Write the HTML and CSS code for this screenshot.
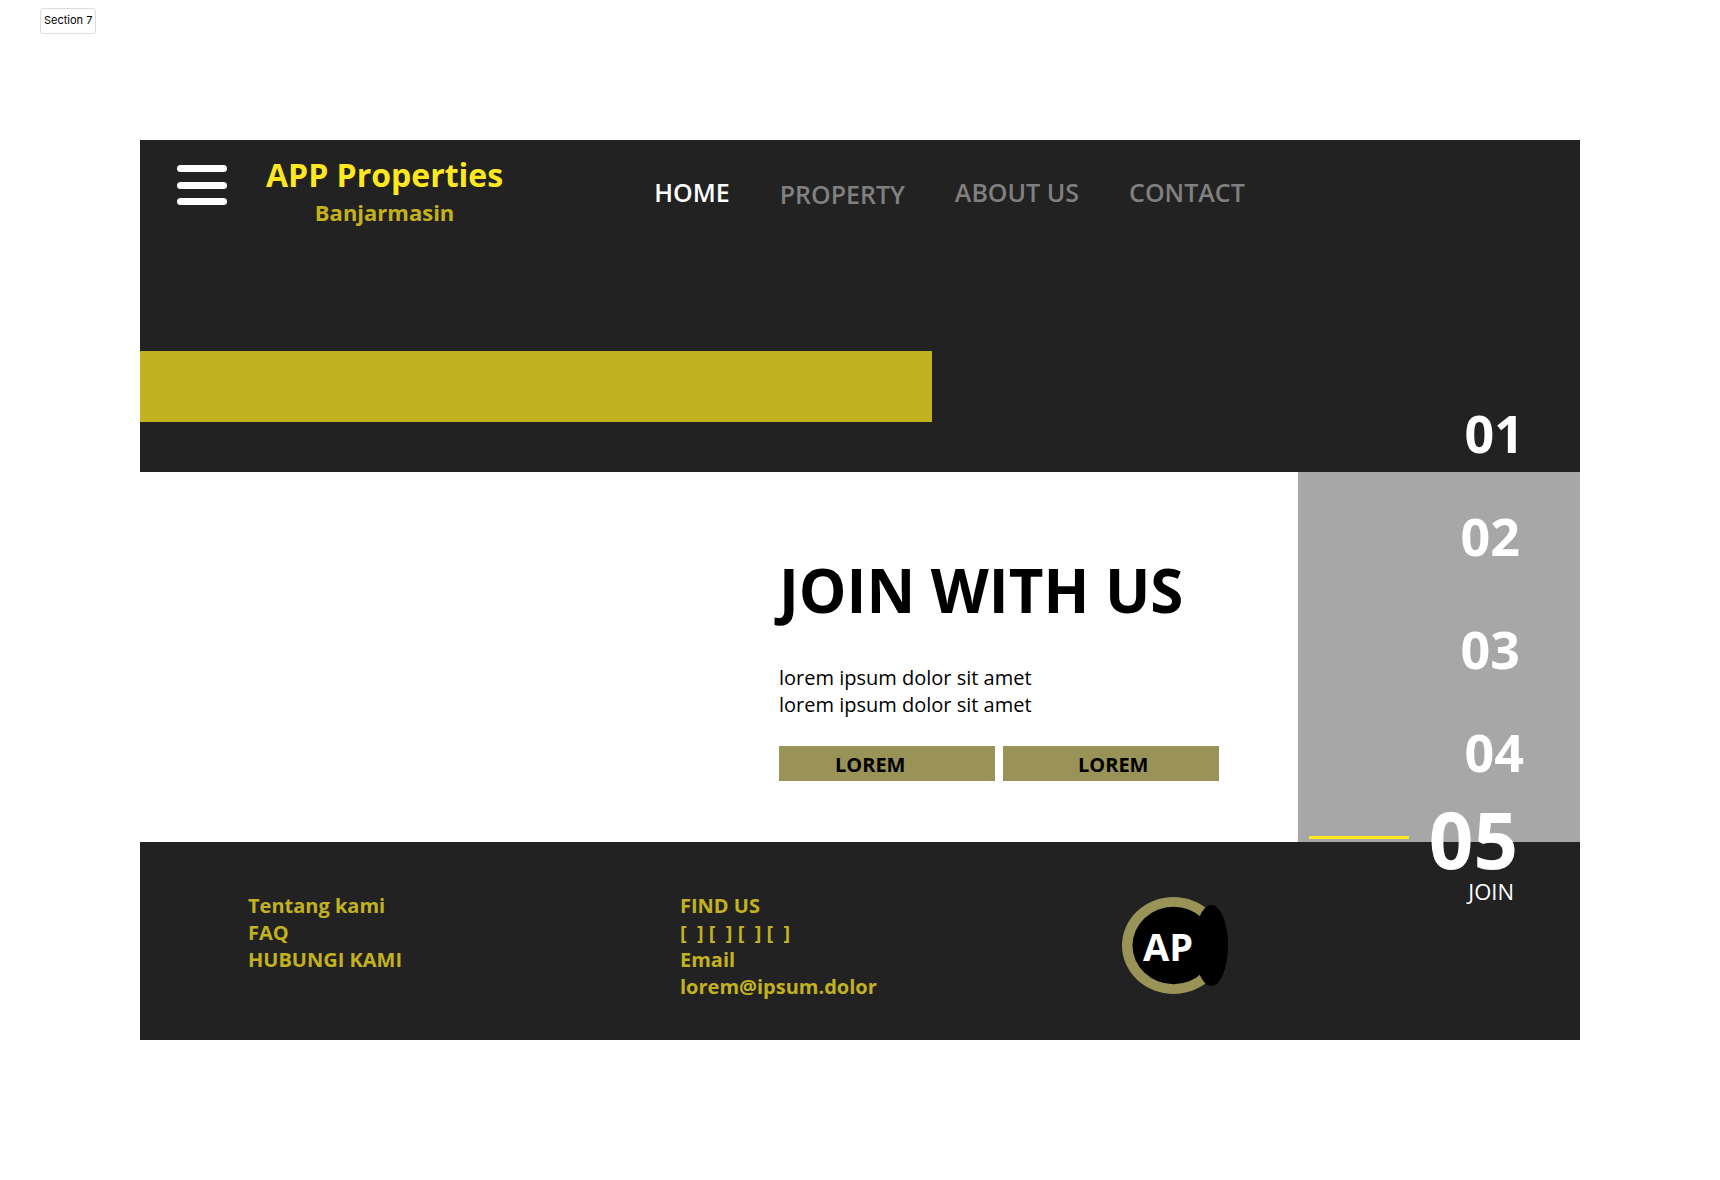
FILE: index.html
```html
<!DOCTYPE html>
<html lang="id">
<head>
<meta charset="utf-8">
<meta name="viewport" content="width=device-width, initial-scale=1">
<title>APP Properties Banjarmasin</title>
<link rel="stylesheet" href="styles.css">
</head>
<body>
<div class="tag">Section 7</div>
<div class="frame">
  <header class="header">
    <div class="topbar">
      <button class="menu" type="button" aria-label="Menu">
        <span class="menu-line"></span>
        <span class="menu-line"></span>
        <span class="menu-line"></span>
      </button>
      <div class="brand">
        <div class="brand-name">APP Properties</div>
        <div class="brand-city">Banjarmasin</div>
      </div>
      <nav class="nav">
        <a class="nav-link nav-current" href="#home">HOME</a>
        <a class="nav-link nav-low" href="#property">PROPERTY</a>
        <a class="nav-link" href="#about">ABOUT US</a>
        <a class="nav-link" href="#contact">CONTACT</a>
      </nav>
    </div>
    <div class="banner"></div>
  </header>

  <main class="main">
    <section class="join">
      <h1 class="title">JOIN WITH US</h1>
      <p class="text">lorem ipsum dolor sit amet<br>lorem ipsum dolor sit amet</p>
      <div class="actions">
        <button class="action action-first" type="button">LOREM</button>
        <button class="action action-second" type="button">LOREM</button>
      </div>
    </section>
  </main>
  <div class="rail"></div>

  <footer class="footer">
    <div class="column">
      <a href="#about">Tentang kami</a>
      <a href="#faq">FAQ</a>
      <a href="#contact">HUBUNGI KAMI</a>
    </div>
    <div class="column">
      <span>FIND US</span>
      <span class="socials">[  ] [  ] [  ] [  ]</span>
      <span>Email</span>
      <a href="mailto:lorem@ipsum.dolor">lorem@ipsum.dolor</a>
    </div>
    <svg class="logo" width="108" height="98" viewBox="0 0 108 98" role="img" aria-label="AP">
      <ellipse cx="51.5" cy="48.5" rx="51.5" ry="48.5" fill="#9a9357"/>
      <ellipse cx="51.5" cy="48.5" rx="41" ry="38.7" fill="#000"/>
      <ellipse cx="89.3" cy="48.5" rx="16.7" ry="40.7" fill="#000"/>
      <text class="logo-text" x="21" y="64">AP</text>
    </svg>
  </footer>

  <ol class="steps">
    <li class="step step-inset"><a href="#s1">01</a></li>
    <li class="step"><a href="#s2">02</a></li>
    <li class="step step-spaced"><a href="#s3">03</a></li>
    <li class="step step-inset"><a href="#s4">04</a></li>
    <li class="step step-active">
      <span class="marker"></span>
      <a href="#s5">05</a>
    </li>
    <li class="step-label">JOIN</li>
  </ol>
</div>
</body>
</html>
```
FILE: styles.css
```css
* {
  box-sizing: border-box;
}

body {
  margin: 0;
  padding: 8px 140px 140px;
  background: #fff;
  color: #000;
  font-family: "Open Sans", sans-serif;
  font-size: 20px;
  line-height: 27px;
}

a {
  color: inherit;
  text-decoration: none;
}

button {
  border: 0;
  color: inherit;
  font: inherit;
  cursor: pointer;
}

.tag {
  width: max-content;
  margin: 0 0 106px -100px;
  padding: 0 3px 1px;
  border: 1px solid #dcdcdc;
  border-radius: 3px;
  font-family: Inter, sans-serif;
  font-size: 11px;
  line-height: 23px;
}

.frame {
  display: grid;
  grid-template-columns: 1fr 282px;
}

.header {
  grid-column: 1 / -1;
  grid-row: 1;
  padding: 13px 0 50px;
  background: #222;
}

.topbar {
  display: flex;
  align-items: flex-start;
  padding-left: 37px;
}

.menu {
  display: flex;
  flex-direction: column;
  justify-content: space-between;
  width: 50px;
  height: 40px;
  margin-top: 12px;
  padding: 0;
  background: none;
}

.menu-line {
  height: 7px;
  border-radius: 4px;
  background: #fff;
}

.brand {
  margin-left: 39px;
  font-weight: 700;
  text-align: center;
}

.brand-name {
  color: #ffe81f;
  font-size: 32px;
  line-height: 44px;
}

.brand-city {
  color: #c2b21f;
  font-size: 22px;
  line-height: 30px;
}

.nav {
  display: flex;
  gap: 50px;
  margin: 22px 0 0 151px;
  color: #808080;
  font-size: 25px;
  font-weight: 600;
  line-height: 34px;
}

.nav-current {
  color: #fff;
}

.nav-low {
  padding-top: 2px;
}

.banner {
  width: 55%;
  height: 71px;
  margin-top: 124px;
  background: #c2b21f;
}

.main {
  display: grid;
  grid-row: 2;
  grid-template-columns: 639fr 519fr;
  padding: 77px 0 61px;
}

.join {
  grid-column: 2;
}

.title {
  margin: 0 0 33px;
  font-size: 60px;
  font-weight: 700;
  line-height: 82px;
}

.text {
  margin: 0 0 28px;
}

.actions {
  display: flex;
  gap: 8px;
}

.action {
  width: 216px;
  padding: 5px 0 3px;
  background: #9a9357;
  font-weight: 700;
  text-align: left;
}

.action-first {
  padding-left: 56px;
}

.action-second {
  padding-left: 75px;
}

.rail {
  grid-column: 2;
  grid-row: 2;
  background: #a7a7a7;
}

.footer {
  display: grid;
  grid-column: 1 / -1;
  grid-row: 3;
  grid-template-columns: 432fr 442fr 458fr;
  padding: 50px 0 40px 108px;
  background: #222;
  color: #c2b21f;
  font-weight: 700;
}

.column {
  display: flex;
  flex-direction: column;
  align-items: flex-start;
}

.socials {
  white-space: pre;
}

.logo {
  margin-top: 5px;
}

.logo-text {
  fill: #fff;
  font-size: 38px;
  font-weight: 700;
}

.steps {
  grid-column: 2;
  grid-row: 1 / 4;
  align-self: start;
  margin: 0;
  padding: 257px 0 0;
  color: #fff;
  list-style: none;
}

.step {
  display: flex;
  align-items: center;
  justify-content: flex-end;
  margin-bottom: 31px;
  padding-right: 60px;
  font-size: 52px;
  font-weight: 700;
  line-height: 72px;
}

.step-inset {
  padding-right: 56px;
}

.step-spaced {
  margin-top: 41px;
}

.step-active {
  gap: 20px;
  margin: -17px 0 0;
  padding-right: 62px;
  font-size: 78px;
  line-height: 74px;
}

.marker {
  width: 100px;
  height: 3px;
  margin-bottom: 3px;
  background: #ffe81f;
}

.step-label {
  padding-right: 66px;
  font-size: 22px;
  line-height: 30px;
  text-align: right;
}
```
